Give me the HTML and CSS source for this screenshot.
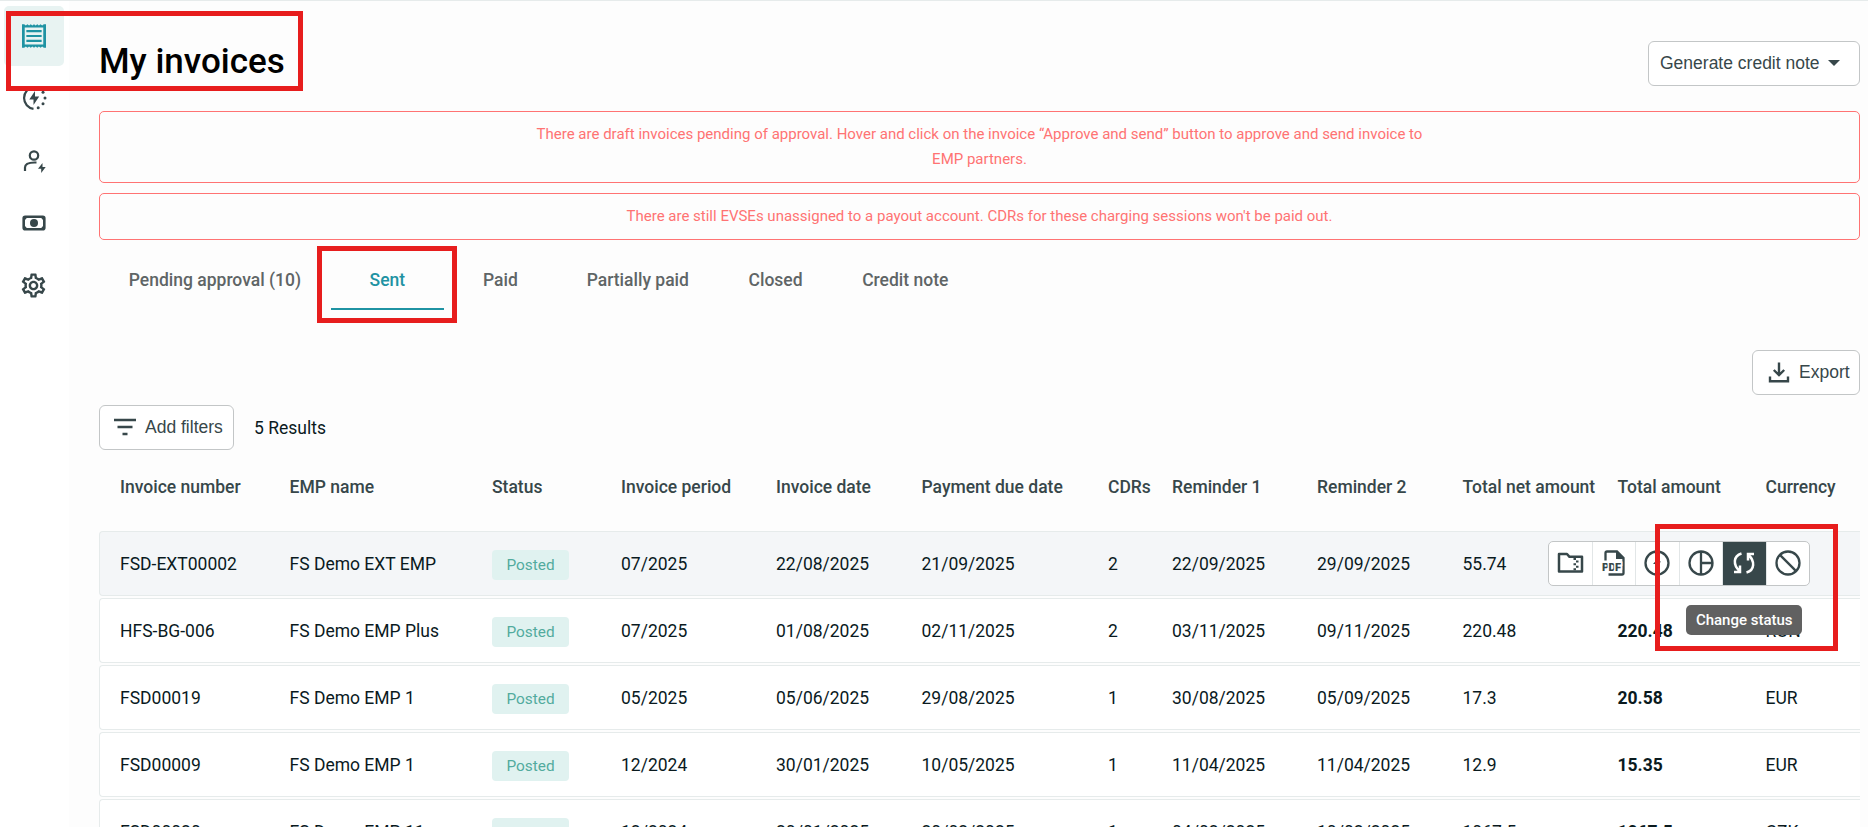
FILE: index.html
```
<!DOCTYPE html>
<html lang="en">
<head>
    <meta charset="UTF-8">
    <meta name="viewport" content="width=device-width, initial-scale=1.0">
    <title>My invoices</title>
    <link rel="stylesheet" href="styles.css">
</head>
<body>
    <nav class="sidebar">
        <a class="nav-item active">
            <svg width="24" height="26" viewBox="1 1 22 22" preserveAspectRatio="none"><path fill="currentColor" d="M19.500 3.200 18 2l-1.500 1.200L15 2l-1.500 1.200L12 2l-1.500 1.200L9 2 7.500 3.200 6 2 4.500 3.200 3 2H1v20h2l1.500-1.200L6 22l1.500-1.200L9 22l1.500-1.200L12 22l1.500-1.200L15 22l1.500-1.200L18 22l1.500-1.200L21 22h2V2h-2l-1.500 1.200zM20.500 19.200h-17V4.800h17v14.400zM5 15.200h14v1.800H5zm0-4.100h14v1.800H5zm0-4.100h14v1.800H5z"/></svg>
        </a>
        <a class="nav-item">
            <svg width="26" height="26" viewBox="0 0 26 26"><path fill="none" stroke="currentColor" stroke-width="2.200" d="M12.500 2.200A10.900 10.900 0 0 0 12.500 23.800"/><g fill="currentColor"><circle cx="17.200" cy="22.800" r="1.500"/><circle cx="22" cy="18.800" r="1.500"/><circle cx="24" cy="13" r="1.500"/><circle cx="22" cy="7.200" r="1.500"/><circle cx="17.200" cy="3.200" r="1.500"/><path d="M14 6 8.300 14.500h4.200v5.500l5.700-8.500H14z"/></g></svg>
        </a>
        <a class="nav-item">
            <svg width="26" height="26" viewBox="0 0 26 26"><g fill="none" stroke="currentColor" stroke-width="2.200"><circle cx="13" cy="7.500" r="4.200"/><path d="M4 23v-3.500c0-3 3.500-5 9.500-5h2"/></g><path fill="currentColor" d="M21.500 15 17 20.800h3.200V25l4.500-6h-3.200z"/></svg>
        </a>
        <a class="nav-item">
            <svg width="26" height="26" viewBox="0 0 26 26"><rect x="2.700" y="6.700" width="20.600" height="12.600" rx="1.500" fill="none" stroke="currentColor" stroke-width="2.600"/><circle cx="13" cy="13" r="4" fill="currentColor"/><path fill="currentColor" d="M3 6h4.500L4 10zM23 6h-4.500L22 10zM3 20h4.500L4 16zM23 20h-4.500L22 16z"/></svg>
        </a>
        <a class="nav-item">
            <svg width="29" height="29" viewBox="0 0 24 24"><path fill="currentColor" d="M19.430 12.980c.04-.32.07-.64.07-.98 0-.34-.03-.66-.07-.98l2.110-1.650c.19-.15.24-.42.12-.64l-2-3.460c-.09-.16-.26-.25-.44-.25-.06 0-.12.010-.17.030l-2.490 1c-.52-.4-1.080-.73-1.690-.98l-.38-2.650C14.460 2.180 14.250 2 14 2h-4c-.25 0-.46.18-.49.42l-.38 2.650c-.61.25-1.170.59-1.690.98l-2.490-1c-.06-.02-.12-.03-.18-.03-.17 0-.34.09-.43.25l-2 3.460c-.13.22-.07.49.12.64l2.110 1.650c-.04.32-.07.65-.07.98 0 .33.03.66.07.98l-2.110 1.650c-.19.15-.24.42-.12.64l2 3.460c.09.16.26.25.44.25.06 0 .12-.01.17-.03l2.490-1c.52.4 1.080.73 1.690.98l.38 2.650c.03.24.24.42.49.42h4c.25 0 .46-.18.49-.42l.38-2.650c.61-.25 1.170-.59 1.690-.98l2.490 1c.06.02.12.03.18.03.17 0 .34-.09.43-.25l2-3.460c.12-.22.07-.49-.12-.64l-2.110-1.650zm-1.980-1.710c.04.31.05.52.05.73 0 .21-.02.43-.05.73l-.14 1.130.89.7 1.080.84-.7 1.210-1.270-.51-1.040-.42-.9.68c-.43.32-.84.56-1.250.73l-1.060.43-.16 1.130-.2 1.350h-1.400l-.19-1.350-.16-1.130-1.060-.43c-.43-.18-.83-.41-1.230-.71l-.91-.7-1.060.43-1.270.51-.7-1.210 1.080-.84.89-.7-.14-1.130c-.03-.31-.05-.54-.05-.74s.02-.43.05-.73l.14-1.130-.89-.7-1.080-.84.7-1.210 1.270.51 1.040.42.9-.68c.43-.32.84-.56 1.250-.73l1.060-.43.16-1.130.2-1.350h1.390l.19 1.350.16 1.130 1.060.43c.43.18.83.41 1.230.71l.91.7 1.060-.43 1.270-.51.7 1.210-1.070.85-.89.7.14 1.130zM12 8c-2.210 0-4 1.790-4 4s1.790 4 4 4 4-1.790 4-4-1.790-4-4-4zm0 6c-1.100 0-2-.9-2-2s.9-2 2-2 2 .9 2 2-.9 2-2 2z"/></svg>
        </a>
    </nav>

    <main class="content">
        <header class="page-header">
            <h1>My invoices</h1>
            <button class="btn credit-btn">Generate credit note <span class="caret"></span></button>
        </header>

        <div class="alert"><p>There are draft invoices pending of approval. Hover and click on the invoice “Approve and send” button to approve and send invoice to EMP partners.</p></div>
        <div class="alert"><p>There are still EVSEs unassigned to a payout account. CDRs for these charging sessions won't be paid out.</p></div>

        <div class="tabs">
            <a class="tab">Pending approval (10)</a>
            <a class="tab active">Sent</a>
            <a class="tab">Paid</a>
            <a class="tab">Partially paid</a>
            <a class="tab">Closed</a>
            <a class="tab">Credit note</a>
        </div>

        <div class="export-bar">
            <button class="btn export-btn">
                <svg width="22" height="22" viewBox="0 0 22 22" fill="none" stroke="currentColor" stroke-width="2.400"><path d="M11 1.500v12M5.800 9l5.200 5 5.200-5M2 15.500v4.800h18v-4.800"/></svg>
                Export
            </button>
        </div>

        <div class="filter-bar">
            <button class="btn filter-btn">
                <svg width="22" height="18" viewBox="0 0 22 18" fill="none" stroke="currentColor" stroke-width="2.400"><path d="M0 2h22M3.500 9h15M8.500 16h5"/></svg>
                Add filters
            </button>
            <span class="results">5 Results</span>
        </div>

        <div class="table">
            <div class="row head">
                <span>Invoice number</span><span>EMP name</span><span>Status</span><span>Invoice period</span><span>Invoice date</span><span>Payment due date</span><span>CDRs</span><span>Reminder 1</span><span>Reminder 2</span><span>Total net amount</span><span>Total amount</span><span>Currency</span>
            </div>
            <div class="row hover">
                <span>FSD-EXT00002</span><span>FS Demo EXT EMP</span><span><em class="badge">Posted</em></span><span>07/2025</span><span>22/08/2025</span><span>21/09/2025</span><span>2</span><span>22/09/2025</span><span>29/09/2025</span><span>55.74</span><span></span><span></span>
                <div class="actions">
                    <button class="action">
                        <svg width="28" height="28" viewBox="0 0 28 28" fill="none" stroke="currentColor" stroke-width="2.500"><path d="M3 5h8l2.500 2.800H26v14.700H3z" stroke-linejoin="round"/><path d="M17.500 10h2.500M20 12.600h2.500M17.500 15.200h2.500M20 17.800h2.500M17.500 20.200h2.500" stroke-width="2"/></svg>
                    </button>
                    <button class="action">
                        <svg width="28" height="28" viewBox="0 0 28 28"><path fill="none" stroke="currentColor" stroke-width="2.300" d="M5.500 11.500V4q0-1.500 1.500-1.500h10l6.500 6.500v15q0 1.500-1.500 1.500H8.500"/><path fill="currentColor" d="M16 2l8 8h-8z"/><text x="2" y="21.500" textLength="19" class="pdf">PDF</text></svg>
                    </button>
                    <button class="action">
                        <svg width="28" height="28" viewBox="0 0 28 28"><circle cx="14" cy="14" r="11.500" fill="none" stroke="currentColor" stroke-width="2.300"/><path fill="currentColor" d="M15 9.500 10 15h4l-1 4 5-6.500h-4z"/></svg>
                    </button>
                    <button class="action">
                        <svg width="28" height="28" viewBox="0 0 28 28" fill="none" stroke="currentColor" stroke-width="2.300"><circle cx="14" cy="14" r="11.500"/><path d="M14 2.500v23M14 14h11.500"/></svg>
                    </button>
                    <button class="action selected">
                        <svg width="28" height="28" viewBox="0 0 28 28" fill="none" stroke="currentColor" stroke-width="2.500"><path d="M11.500 4.500C3 7 3 16 9.500 22M4 23h6v-6.500M16.500 23.500c8.500-2.500 8.500-11.500 2-17.500M24 5h-6v6.500"/></svg>
                        <span class="tooltip">Change status</span>
                    </button>
                    <button class="action">
                        <svg width="28" height="28" viewBox="0 0 28 28" fill="none" stroke="currentColor" stroke-width="2.300"><circle cx="14" cy="14" r="11.500"/><path d="M5.900 5.900l16.200 16.200"/></svg>
                    </button>
                </div>
            </div>
            <div class="row">
                <span>HFS-BG-006</span><span>FS Demo EMP Plus</span><span><em class="badge">Posted</em></span><span>07/2025</span><span>01/08/2025</span><span>02/11/2025</span><span>2</span><span>03/11/2025</span><span>09/11/2025</span><span>220.48</span><b>220.48</b><span>RON</span>
            </div>
            <div class="row">
                <span>FSD00019</span><span>FS Demo EMP 1</span><span><em class="badge">Posted</em></span><span>05/2025</span><span>05/06/2025</span><span>29/08/2025</span><span>1</span><span>30/08/2025</span><span>05/09/2025</span><span>17.3</span><b>20.58</b><span>EUR</span>
            </div>
            <div class="row">
                <span>FSD00009</span><span>FS Demo EMP 1</span><span><em class="badge">Posted</em></span><span>12/2024</span><span>30/01/2025</span><span>10/05/2025</span><span>1</span><span>11/04/2025</span><span>11/04/2025</span><span>12.9</span><b>15.35</b><span>EUR</span>
            </div>
            <div class="row">
                <span>FSD00020</span><span>FS Demo EMP 11</span><span><em class="badge">Posted</em></span><span>12/2024</span><span>20/01/2025</span><span>20/02/2025</span><span>1</span><span>04/02/2025</span><span>10/02/2025</span><span>1067.5</span><b>1067.5</b><span>CZK</span>
            </div>
        </div>
    </main>

    <!-- highlight frames over the page -->
    <div class="mark mark-title"></div>
    <div class="mark mark-tab"></div>
    <div class="mark mark-action"></div>
</body>
</html>
```
FILE: styles.css
```
* {
    box-sizing: border-box;
}

body {
    margin: 0;
    height: 827px;
    overflow: hidden;
    display: flex;
    border-top: 1px solid #e6ebeb;
    background-color: #fdfdfd;
    font-family: Roboto, sans-serif;
    font-size: 17.5px;
    color: #0a1a1e;
}

svg {
    display: block;
    flex: none;
}

.sidebar {
    width: 69px;
    flex: none;
    padding: 5px 5px 0 4px;
    background-color: #fff;
    display: flex;
    flex-direction: column;
    gap: 2.4px;
}

.nav-item {
    width: 60px;
    height: 60px;
    padding-right: 1px;
    display: flex;
    justify-content: center;
    align-items: center;
    border-radius: 5px;
    color: #37474a;
}

.nav-item.active {
    padding-right: 0;
    background-color: #e8f3f2;
    color: #1f93a3;
}

.content {
    width: 1791px;
    flex: none;
    padding-left: 30px;
}

.page-header {
    height: 110px;
    padding-top: 40px;
    display: flex;
    justify-content: space-between;
    align-items: flex-start;
}

h1 {
    margin: 0;
    font-size: 35px;
    line-height: 42px;
    font-weight: 500;
    color: #000;
}

.btn {
    height: 45px;
    display: flex;
    align-items: center;
    background-color: #fff;
    border: 1px solid #c3c6c7;
    border-radius: 6px;
    color: #37474a;
    font-family: "Liberation Sans", Arial, sans-serif;
    font-size: 17.5px;
}

.credit-btn {
    width: 212px;
    padding: 0 0 1px 11px;
}

.caret {
    margin-left: 8px;
    border: 6px solid transparent;
    border-top-color: #37474a;
    border-bottom: 0;
}

.alert {
    margin-bottom: 10px;
    padding: 10px 0;
    border: 1px solid #ff7373;
    border-radius: 5px;
    display: flex;
    justify-content: center;
}

.alert p {
    width: 900px;
    margin: 0;
    text-align: center;
    font-size: 15px;
    line-height: 25px;
    color: #ff7373;
}

.tabs {
    height: 60px;
    display: flex;
}

.tab {
    min-width: 113px;
    padding: 20px 29.8px 0;
    border-bottom: 2px solid transparent;
    text-align: center;
    font-weight: 500;
    line-height: 21px;
    color: #5f6566;
}

.tab.active {
    border-color: #1f93a3;
    color: #1f93a3;
}

.export-bar {
    margin-top: 40px;
    display: flex;
    justify-content: flex-end;
}

.export-btn {
    width: 108px;
    padding: 0 0 1px 15px;
    gap: 9px;
}

.filter-bar {
    margin-top: 10px;
    display: flex;
    align-items: center;
}

.filter-btn {
    width: 135px;
    padding: 0 0 1px 14px;
    gap: 9px;
}

.results {
    margin-left: 20px;
}

.row {
    height: 65px;
    margin-bottom: 2px;
    padding-left: 20px;
    display: grid;
    grid-template-columns: 169.500px 202.500px 129px 155px 145.500px 186.500px 64px 145px 145.500px 155px 148px 80px;
    align-items: center;
    position: relative;
    white-space: nowrap;
    background-color: #fff;
    border: 1px solid #e6ebeb;
    border-right: 0;
    border-radius: 4px 0 0 4px;
}

.row.head {
    height: 81px;
    margin: 0;
    padding-bottom: 7px;
    background: none;
    border-color: transparent;
    font-weight: 500;
    color: #37474a;
}

.row.hover {
    background-color: #f4f6f8;
    z-index: 1;
}

.badge {
    width: 77px;
    height: 30px;
    margin-top: 2px;
    display: block;
    border-radius: 4px;
    background-color: #e0f2f0;
    color: #52ab9e;
    font-style: normal;
    font-size: 15.4px;
    line-height: 30px;
    text-align: center;
}

/* floats over the hovered row */
.actions {
    position: absolute;
    right: 50px;
    top: 9px;
    width: 262px;
    height: 45px;
    display: flex;
    background-color: #fff;
    border: 1px solid #c3c6c7;
    border-radius: 5px;
}

.action {
    flex: 1;
    padding: 0 0 1px;
    display: flex;
    justify-content: center;
    align-items: center;
    position: relative;
    background: none;
    border: 0;
    border-right: 1px solid #e2e6e7;
    color: #37474a;
}

.action:last-child {
    border-right: 0;
}

.action.selected {
    background-color: #37474a;
    color: #fff;
}

.pdf {
    font-family: Roboto, sans-serif;
    font-size: 11px;
    font-weight: 900;
    fill: #37474a;
    stroke: #fff;
    stroke-width: 3px;
    paint-order: stroke;
}

.tooltip {
    position: absolute;
    top: 63px;
    left: 50%;
    width: 116px;
    height: 30px;
    margin-left: -58px;
    border-radius: 5px;
    background-color: #616161;
    color: #fff;
    font-family: Roboto, sans-serif;
    font-size: 15px;
    font-weight: 500;
    line-height: 30px;
}

.mark {
    position: absolute;
    z-index: 2;
    border: 5px solid #e71d1d;
}

.mark-title {
    left: 6px;
    top: 11px;
    width: 297px;
    height: 80px;
}

.mark-tab {
    left: 317px;
    top: 246px;
    width: 140px;
    height: 77px;
}

.mark-action {
    left: 1655px;
    top: 524px;
    width: 183px;
    height: 127px;
}
```
